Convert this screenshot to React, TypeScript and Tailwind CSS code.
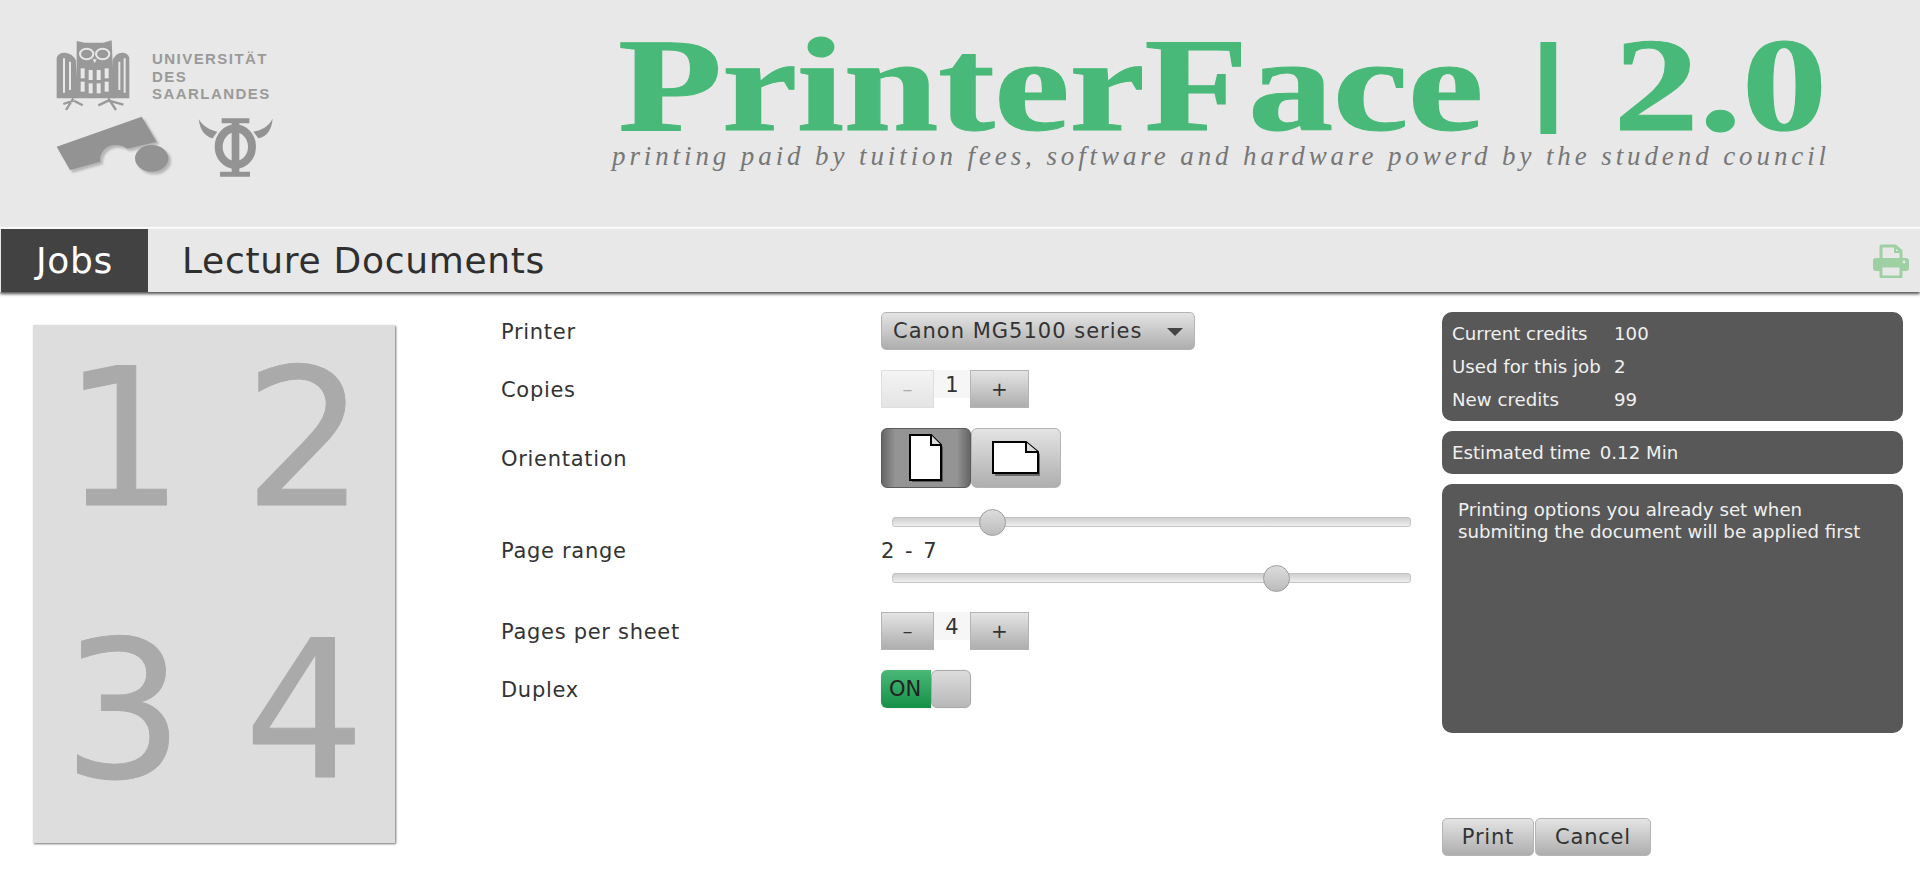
import type { ReactNode } from "react";

const credits = [
  { label: "Current credits", value: "100" },
  { label: "Used for this job", value: "2" },
  { label: "New credits", value: "99" },
];

const raisedButton =
  "bg-[linear-gradient(to_bottom,#e4e4e4,#aeaeae)] border border-[#b4b4b4] text-[#333] flex items-center justify-center";

function UniLogo() {
  return (
    <div className="relative w-[250px] h-[160px] ml-[40px] mt-[30px] shrink-0">
      <svg viewBox="0 0 750 480" className="w-[250px] h-[160px]">
        <g fill="#999999">
          {/* owl */}
          <path d="M110 33 L135 38 L190 38 L215 31 L218 100 L225 205 L105 205 L110 100 Z" />
          <path d="M50 205 L50 85 Q52 68 75 68 Q98 70 108 92 L108 205 Z" />
          <path d="M268 205 L268 85 Q266 68 245 68 Q225 70 218 92 L218 205 Z" />
          <path
            d="M100 205 L78 240 M100 212 L70 222 M102 212 L128 226 M205 205 L228 240 M205 212 L175 226 M207 212 L250 224"
            stroke="#999999"
            strokeWidth="7"
            fill="none"
          />
          <g fill="none" stroke="#e8e8e8" strokeWidth="6">
            <ellipse cx="140" cy="72" rx="20" ry="16" />
            <ellipse cx="188" cy="72" rx="20" ry="16" />
            <path d="M72 85 V188 M90 95 V180 M238 95 V180 M254 85 V188" />
          </g>
          <path d="M158 88 L170 88 L164 100 Z" fill="#e8e8e8" />
          <g fill="#e8e8e8">
            <rect x="122" y="115" width="12" height="30" />
            <rect x="146" y="120" width="12" height="30" />
            <rect x="170" y="120" width="12" height="30" />
            <rect x="194" y="115" width="12" height="30" />
            <rect x="122" y="155" width="12" height="30" />
            <rect x="146" y="160" width="12" height="30" />
            <rect x="170" y="160" width="12" height="30" />
            <rect x="194" y="155" width="12" height="30" />
          </g>
        </g>
        {/* council shape */}
        <g className="blur-[3px]" fill="#b5b5b5" transform="translate(8 8)">
          <path d="M50 350 L305 260 L350 335 L262 356 C225 332 178 350 180 395 L90 420 Z" />
          <ellipse cx="335" cy="385" rx="50" ry="40" />
        </g>
        <g className="blur-[1px]" fill="#939393">
          <path d="M50 350 L305 260 L350 335 L262 356 C225 332 178 350 180 395 L90 420 Z" />
          <ellipse cx="335" cy="385" rx="50" ry="40" />
          {/* phi */}
          <path d="M545 265 H628 V280 H598 V425 H630 V440 H540 V425 H575 V280 H545 Z" />
          <ellipse cx="586" cy="350" rx="50" ry="55" fill="none" stroke="#939393" strokeWidth="24" />
          <path d="M476 268 C490 290 510 300 532 305 L518 325 C495 320 480 300 476 268 Z" />
          <path d="M698 266 C695 300 680 320 655 325 L640 305 C665 300 685 290 698 266 Z" />
        </g>
      </svg>
      <div className="absolute left-[112px] top-[20px] text-[15px] leading-[17.5px] font-bold tracking-[1.45px] text-[#9a9a9a] font-['Liberation_Sans',sans-serif]">
        <div>UNIVERSITÄT</div>
        <div>DES</div>
        <div>SAARLANDES</div>
      </div>
    </div>
  );
}

function PrinterIcon() {
  return (
    <svg viewBox="0 0 36 34" className="w-[36px] h-[34px] mr-[11px]">
      <path d="M8 15 V2 H22 L28 7 V15" fill="#e8e8e8" stroke="#9fd0a4" strokeWidth="3" strokeLinejoin="round" />
      <path d="M22 2 V8 H28" fill="none" stroke="#9fd0a4" strokeWidth="2" />
      <rect x="0" y="14" width="36" height="13" rx="3" fill="#9fd0a4" />
      <rect x="8" y="22" width="20" height="11" rx="1" fill="#e8e8e8" stroke="#9fd0a4" strokeWidth="3" />
      <circle cx="31" cy="18" r="1.4" fill="#e8e8e8" />
    </svg>
  );
}

function Stepper({ value, disabled }: { value: string; disabled?: boolean }) {
  return (
    <div className="flex items-start h-[38px]">
      <div
        className={
          disabled
            ? "w-[53px] h-[38px] border border-[#dedede] bg-[linear-gradient(to_bottom,#f4f4f4,#e4e4e4)] text-[#aaa] flex items-center justify-center text-[20px]"
            : `w-[53px] h-[38px] ${raisedButton} text-[20px]`
        }
      >
        –
      </div>
      <div className="w-[36px] h-[28px] pt-[3px] bg-[#f6f6f6] flex items-center justify-center text-[21px] text-[#333]">
        {value}
      </div>
      <div className={`w-[59px] h-[38px] ${raisedButton} text-[20px]`}>+</div>
    </div>
  );
}

function Slider({ thumbLeft }: { thumbLeft: string }) {
  return (
    <div className="relative w-[519px] h-[10px] ml-[11px] rounded-[3px] border border-[#c4c4c4] bg-[linear-gradient(to_bottom,#cfcfcf,#eeeeee)]">
      <div
        className={`absolute top-[-9px] ${thumbLeft} w-[27px] h-[27px] rounded-full border border-[#9c9c9c] bg-[linear-gradient(to_bottom,#dcdcdc,#bcbcbc)]`}
      />
    </div>
  );
}

function FormRow({ label, className, children }: { label: string; className: string; children: ReactNode }) {
  return (
    <div className={`flex items-center ${className}`}>
      <div className="w-[380px] shrink-0 pt-[3px] text-[#333] tracking-[0.7px]">{label}</div>
      {children}
    </div>
  );
}

function PrintForm() {
  return (
    <div className="w-[941px] shrink-0 text-[21px]">
      <FormRow label="Printer" className="h-[38px]">
        <div className="relative w-[314px] h-[38px] pt-[2px] rounded-[5px] border border-[#b4b4b4] bg-[linear-gradient(to_bottom,#e4e4e4,#aeaeae)] flex items-center pl-[11px] text-[#333] tracking-[1px]">
          Canon MG5100 series
          <svg viewBox="0 0 16 8" className="absolute right-[11px] top-[15px] w-[16px] h-[8px]">
            <polygon points="0,0 16,0 8,8" fill="#444444" />
          </svg>
        </div>
      </FormRow>
      <FormRow label="Copies" className="h-[38px] mt-[20px]">
        <Stepper value="1" disabled />
      </FormRow>
      <FormRow label="Orientation" className="h-[60px] mt-[20px]">
        <div className="flex">
          <div className="w-[90px] h-[60px] rounded-[6px] border border-[#5c5c5c] bg-[linear-gradient(to_right,#666666,#949494_15%,#949494_85%,#666666)] flex items-center justify-center">
            <svg viewBox="0 0 36 50" className="w-[36px] h-[50px]">
              <path d="M3 3 H24 L34 13 V48 H3 Z" fill="#333333" transform="translate(1 1)" opacity="0.6" />
              <path d="M2 2 H23 L33 12 V47 H2 Z" fill="#ffffff" stroke="#000000" strokeWidth="2" />
              <path d="M23 2 V12 H33" fill="#dddddd" stroke="#000000" strokeWidth="2" />
            </svg>
          </div>
          <div className={`w-[90px] h-[60px] rounded-[6px] ${raisedButton}`}>
            <svg viewBox="0 0 50 36" className="w-[50px] h-[36px]">
              <path d="M3 3 H36 L48 13 V35 H3 Z" fill="#333333" transform="translate(1 1)" opacity="0.6" />
              <path d="M2 2 H35 L47 12 V33 H2 Z" fill="#ffffff" stroke="#000000" strokeWidth="2" />
              <path d="M35 2 V12 H47" fill="#dddddd" stroke="#000000" strokeWidth="2" />
            </svg>
          </div>
        </div>
      </FormRow>
      <FormRow label="Page range" className="h-[86px] mt-[19px]">
        <div className="w-[530px] flex flex-col">
          <Slider thumbLeft="left-[86px]" />
          <div className="h-[46px] pt-[4px] flex items-center text-[#333] tracking-[2px]">2 - 7</div>
          <Slider thumbLeft="left-[370px]" />
        </div>
      </FormRow>
      <FormRow label="Pages per sheet" className="h-[38px] mt-[19px]">
        <Stepper value="4" />
      </FormRow>
      <FormRow label="Duplex" className="h-[38px] mt-[20px]">
        <div className="flex w-[90px] h-[38px] rounded-[6px] shadow-[0_0_1px_#bbbbbb]">
          <div className="w-[50px] rounded-l-[6px] bg-[linear-gradient(to_bottom,#4bb878,#159048)] flex items-center pl-[8px] pt-px text-[#222]">
            ON
          </div>
          <div className="w-[40px] rounded-[6px] border border-[#aaaaaa] bg-[linear-gradient(to_bottom,#dcdcdc,#b8b8b8)]" />
        </div>
      </FormRow>
    </div>
  );
}

function SidePanel() {
  return (
    <div className="w-[461px] shrink-0 text-[18.2px] text-[#f0f0f0]">
      <div className="h-[109px] rounded-[10px] bg-[#585858] pl-[10px] pt-[5px] grid grid-cols-[162px_1fr] auto-rows-[33px] items-center">
        {credits.map((row) => (
          <div key={row.label} className="contents">
            <div className="whitespace-nowrap">{row.label}</div>
            <div>{row.value}</div>
          </div>
        ))}
      </div>
      <div className="h-[43px] mt-[10px] rounded-[10px] bg-[#585858] pl-[10px] flex items-center gap-[9px]">
        <span>Estimated time</span>
        <span>0.12 Min</span>
      </div>
      <div className="h-[249px] mt-[10px] rounded-[10px] bg-[#585858] pl-[16px] pt-[15px] leading-[22px]">
        Printing options you already set when
        <br />
        submiting the document will be applied first
      </div>
      <div className="flex mt-[85px] text-[21px] tracking-[0.8px]">
        <div className={`w-[92px] h-[38px] pt-px rounded-[5px] ${raisedButton}`}>Print</div>
        <div className={`w-[116px] h-[38px] pt-px ml-px rounded-[5px] ${raisedButton}`}>Cancel</div>
      </div>
    </div>
  );
}

export default function App() {
  return (
    <div className="h-[869px] overflow-hidden bg-white font-['DejaVu_Sans',sans-serif]">
      <header className="h-[227px] bg-[#e8e8e8] flex overflow-hidden">
        <UniLogo />
        <div className="ml-[328px] mt-[25px]">
          <div className="origin-left scale-x-[1.274] whitespace-nowrap font-['Liberation_Serif',serif] font-bold text-[134px] leading-[120px] text-[#48b978] [-webkit-text-stroke:1px_#48b978] [word-spacing:3px]">
            <span className="tracking-[-0.5px]">PrinterFace</span>{" "}
            <span className="inline-block origin-[50%_35px] scale-y-[0.738] [-webkit-text-stroke:3px_#48b978]">|</span> 2.0
          </div>
          <div className="whitespace-nowrap -ml-[6px] -mt-[4px] font-['Liberation_Serif',serif] italic text-[27px] leading-[30px] tracking-[3.9px] text-[#777777]">
            printing paid by tuition fees, software and hardware powerd by the studend council
          </div>
        </div>
      </header>
      <nav className="mt-[2px] h-[63px] bg-[#e8e8e8] flex items-center pl-px shadow-[0_2px_3px_rgba(0,0,0,0.7)] text-[36px] tracking-[0.7px]">
        <div className="w-[147px] h-[63px] bg-[#424242] text-white flex items-center justify-center">Jobs</div>
        <div className="ml-[34px] text-[#2f2f2f]">Lecture Documents</div>
        <div className="ml-auto">
          <PrinterIcon />
        </div>
      </nav>
      <main className="flex pt-[20px]">
        <div className="w-[501px] shrink-0 pl-[33px] pt-[13px]">
          <div className="w-[362px] h-[518px] bg-[#dddddd] shadow-[1px_1px_2px_rgba(0,0,0,0.55)] grid grid-cols-2 content-start gap-y-[82px] pt-[20px] text-[#aaaaaa] text-[190px] leading-none [-webkit-text-stroke:1px_#aaaaaa]">
            {["1", "2", "3", "4"].map((digit) => (
              <div key={digit} className="flex items-center justify-center">
                {digit}
              </div>
            ))}
          </div>
        </div>
        <PrintForm />
        <SidePanel />
      </main>
    </div>
  );
}
